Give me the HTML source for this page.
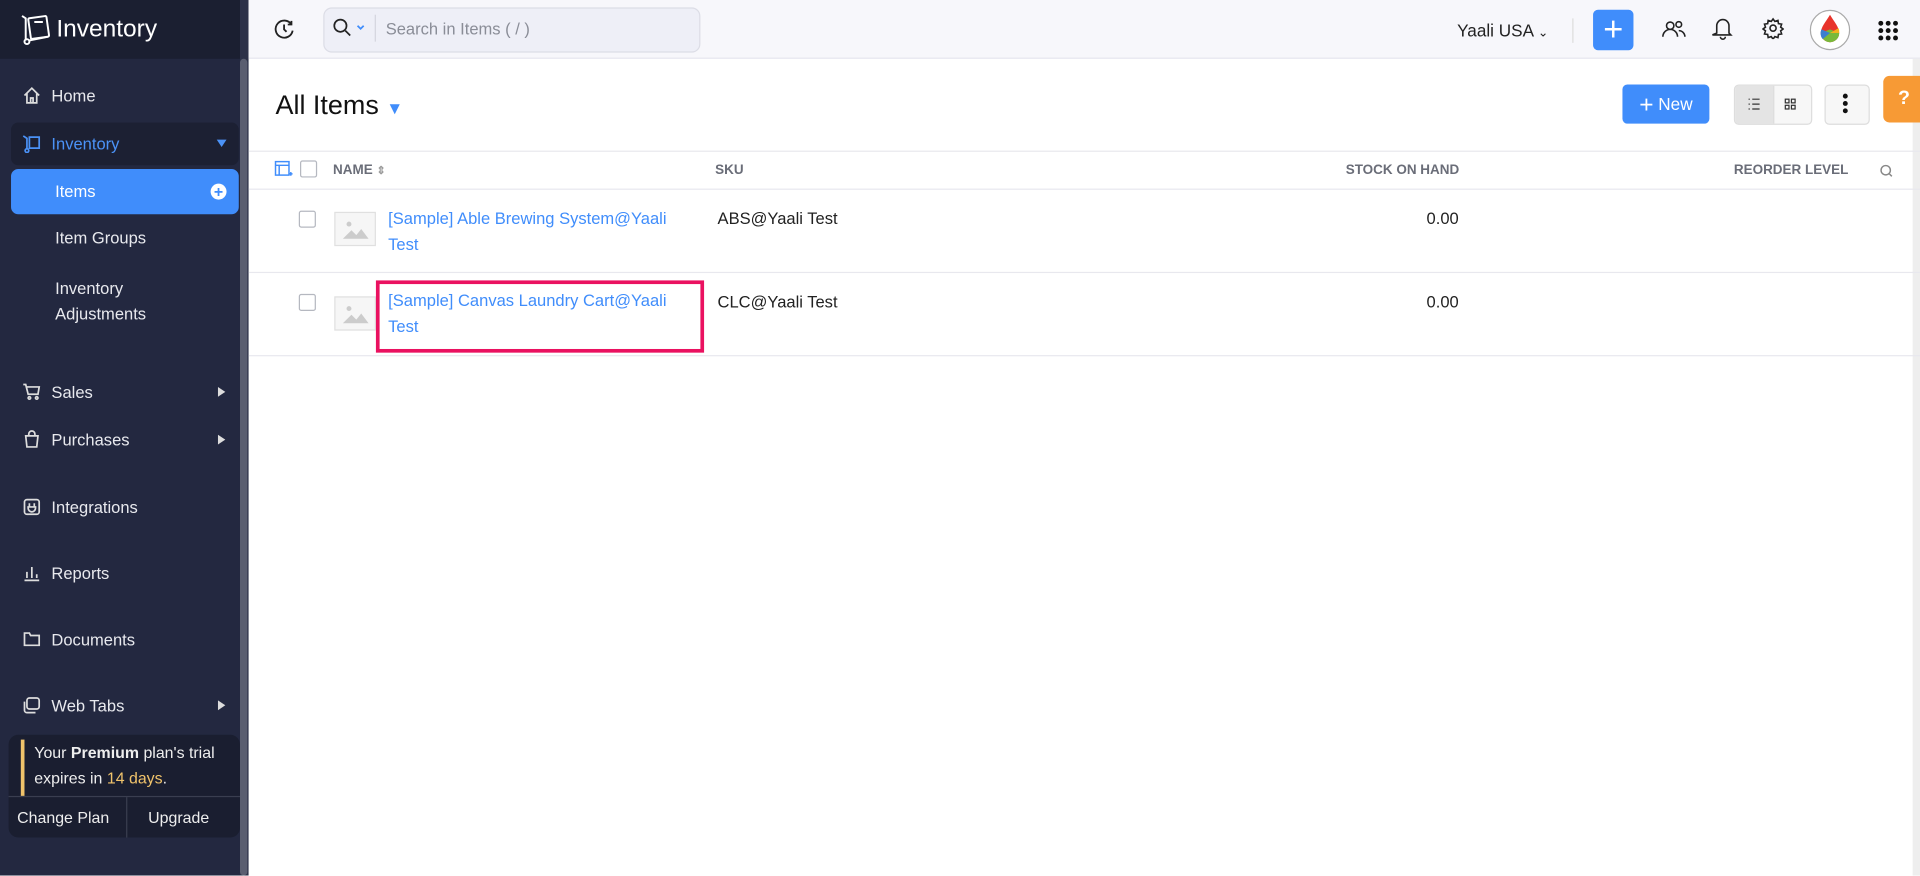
<!DOCTYPE html>
<html><head><meta charset="utf-8"><style>
html,body{margin:0;padding:0;width:1920px;height:876px;overflow:hidden;background:#fff}
#w{width:1568px;height:715px;transform:scale(1.22449);transform-origin:0 0;position:relative;font-family:"Liberation Sans",sans-serif;font-size:13.5px;color:#222}
.sb{position:absolute;left:0;top:0;width:196px;height:715px;background:#232840}
.sbs{position:absolute;left:196px;top:0;width:7px;height:715px;background:#2c3148}
.sbs i{position:absolute;left:0;top:48px;width:6px;height:667px;background:#5a5e70;border-radius:3px}
.logo{position:absolute;left:0;top:0;width:196px;height:48px;background:#1b1f31;color:#fff;font-size:20px}
.nav{position:absolute;left:18px;color:#e8e9ee;font-size:13.5px;display:flex;align-items:center}
.nav svg{margin-right:8px}
.arr{position:absolute;left:178px;width:0;height:0;border-top:4px solid transparent;border-bottom:4px solid transparent;border-left:6px solid #ddd}
.top{position:absolute;left:203px;top:0;right:0;height:47px;background:#f7f7fb;border-bottom:1px solid #e6e6ee}
.hd{font-size:11px;color:#6a6d78;font-weight:bold;position:absolute;top:133px}
.row{position:absolute;left:203px;right:0;border-bottom:1px solid #e8e8ee}
.cb{position:absolute;width:12px;height:12px;border:1px solid #b5b8c0;border-radius:2px;background:#fff}
.img{position:absolute;left:273px;width:32px;height:26px;border:1px solid #e0e0e0;background:#f6f6f6}
.lnk{position:absolute;left:317px;color:#408dfb;font-size:13.5px;line-height:21px}
</style></head><body><div id="w">
<div class="sb"></div><div class="sbs"><i></i></div>
<div class="logo">
<svg style="position:absolute;left:16px;top:11px" width="26" height="26" viewBox="0 0 26 26" fill="none" stroke="#fff" stroke-width="1.6"><path d="M2 2l3 2v18"/><rect x="8" y="3" width="15" height="17" rx="1" transform="rotate(-8 15 11)"/><circle cx="6" cy="23" r="2"/><path d="M8 22l15-3"/><path d="M12 7h7"/></svg>
<span style="position:absolute;left:46px;top:13px">Inventory</span></div>
<div class="nav" style="top:70px"><svg width="16" height="16" viewBox="0 0 16 16" fill="none" stroke="#ddd" stroke-width="1.4"><path d="M2 8l6-6 6 6M4 6v8h8V6M7 14v-4h2v4"/></svg>Home</div>
<div style="position:absolute;left:9px;top:100px;width:186px;height:35px;background:#1c2033;border-radius:6px"></div>
<div class="nav" style="top:109px;color:#4b92f7"><svg width="16" height="16" viewBox="0 0 16 16" fill="none" stroke="#4b92f7" stroke-width="1.4"><path d="M1 2l3 2v9M6 3h8v9H6z"/><circle cx="4" cy="14" r="1.5"/></svg>Inventory</div>
<div style="position:absolute;left:177px;top:114px;border-left:4px solid transparent;border-right:4px solid transparent;border-top:6px solid #4b92f7"></div>
<div style="position:absolute;left:9px;top:138px;width:186px;height:37px;background:#408dfb;border-radius:6px"></div>
<div class="nav" style="top:149px;left:45px;color:#fff">Items</div>
<div style="position:absolute;left:172px;top:150px;width:13px;height:13px;border-radius:50%;background:#fff;color:#408dfb;font-size:13px;line-height:13px;text-align:center;font-weight:bold">+</div>
<div class="nav" style="top:187px;left:45px">Item Groups</div>
<div class="nav" style="top:225px;left:45px;line-height:21px">Inventory<br>Adjustments</div>
<div class="nav" style="top:312px"><svg width="16" height="16" viewBox="0 0 16 16" fill="none" stroke="#ddd" stroke-width="1.4"><path d="M1 2h2l2 8h8l1-6H4"/><circle cx="6" cy="13" r="1"/><circle cx="12" cy="13" r="1"/></svg>Sales</div><div class="arr" style="top:316px"></div>
<div class="nav" style="top:351px"><svg width="16" height="16" viewBox="0 0 16 16" fill="none" stroke="#ddd" stroke-width="1.4"><path d="M3 5h10l-1 9H4zM5.5 5V3.5a2.5 2.5 0 015 0V5"/></svg>Purchases</div><div class="arr" style="top:355px"></div>
<div class="nav" style="top:406px"><svg width="16" height="16" viewBox="0 0 16 16" fill="none" stroke="#ddd" stroke-width="1.4"><rect x="2" y="2" width="12" height="12" rx="2"/><path d="M6 5v3M10 5v3M5 8h6v1a3 3 0 01-6 0z"/></svg>Integrations</div>
<div class="nav" style="top:460px"><svg width="16" height="16" viewBox="0 0 16 16" fill="none" stroke="#ddd" stroke-width="1.4"><path d="M2 14h12M4 12V7M8 12V3M12 12V9"/></svg>Reports</div>
<div class="nav" style="top:514px"><svg width="16" height="16" viewBox="0 0 16 16" fill="none" stroke="#ddd" stroke-width="1.4"><path d="M2 3h4l1 2h7v8H2z"/></svg>Documents</div>
<div class="nav" style="top:568px"><svg width="16" height="16" viewBox="0 0 16 16" fill="none" stroke="#ddd" stroke-width="1.4"><rect x="4" y="2" width="10" height="9" rx="2"/><path d="M2 5v7a2 2 0 002 2h7"/></svg>Web Tabs</div><div class="arr" style="top:572px"></div>
<div style="position:absolute;left:7px;top:600px;width:189px;height:84px;background:#1a1e30;border-radius:8px"></div>
<div style="position:absolute;left:17px;top:604px;width:3px;height:46px;background:#f0c36b"></div>
<div style="position:absolute;left:28px;top:604px;color:#eee;font-size:13px;line-height:21px">Your <b>Premium</b> plan's trial<br>expires in <span style="color:#f0c36b">14 days</span>.</div>
<div style="position:absolute;left:7px;top:650px;width:189px;border-top:1px solid #3a3e50"></div>
<div style="position:absolute;left:103px;top:651px;height:33px;border-left:1px solid #3a3e50"></div>
<div style="position:absolute;left:14px;top:660px;color:#eee;font-size:13px">Change Plan</div>
<div style="position:absolute;left:121px;top:660px;color:#eee;font-size:13px">Upgrade</div>

<div class="top"></div>
<svg style="position:absolute;left:223px;top:15px" width="18" height="18" viewBox="0 0 18 18" fill="none" stroke="#222" stroke-width="1.5"><path d="M15 5A7 7 0 1016 10"/><path d="M15 2v3h-3M9 5v4l2 2"/></svg>
<div style="position:absolute;left:264px;top:6px;width:306px;height:35px;background:#eeeff7;border:1px solid #dcdde6;border-radius:7px"></div>
<svg style="position:absolute;left:271px;top:14px" width="30" height="18" viewBox="0 0 30 18" fill="none" stroke="#222" stroke-width="1.4"><circle cx="7" cy="7" r="5"/><path d="M11 11l4 4"/><path d="M21 7l2.5 2.5L26 7" stroke="#408dfb"/></svg>
<div style="position:absolute;left:306px;top:12px;height:22px;border-left:1px solid #d4d5de"></div>
<div style="position:absolute;left:315px;top:16px;color:#8a8d97;font-size:13.5px">Search in Items ( / )</div>
<div style="position:absolute;left:1190px;top:17px;font-size:14px;color:#222">Yaali USA <span style="font-size:10px">&#8964;</span></div>
<div style="position:absolute;left:1284px;top:15px;height:20px;border-left:1px solid #ddd"></div>
<div style="position:absolute;left:1301px;top:8px;width:33px;height:33px;background:#408dfb;border-radius:4px;color:#fff;font-size:28px;line-height:31px;text-align:center;font-weight:200">+</div>
<svg style="position:absolute;left:1357px;top:15px" width="20" height="18" viewBox="0 0 20 18" fill="none" stroke="#222" stroke-width="1.3"><circle cx="7" cy="6" r="3"/><path d="M1 15a6 6 0 0112 0"/><circle cx="14" cy="5" r="2.3"/><path d="M14 10a5 5 0 015 5"/></svg>
<svg style="position:absolute;left:1398px;top:13px" width="18" height="20" viewBox="0 0 18 20" fill="none" stroke="#222" stroke-width="1.3"><path d="M4 14V8a5 5 0 0110 0v6l1.5 1.5h-15zM7 17a2 2 0 004 0"/></svg>
<svg style="position:absolute;left:1439px;top:14px" width="18" height="18" viewBox="0 0 18 18" fill="none" stroke="#222" stroke-width="1.3"><circle cx="9" cy="9" r="2.5"/><path d="M9 1.5l1.5 2 2.5-.8.4 2.6 2.6.4-.8 2.5 2 1.5-2 1.5.8 2.5-2.6.4-.4 2.6-2.5-.8-1.5 2-1.5-2-2.5.8-.4-2.6-2.6-.4.8-2.5-2-1.5 2-1.5-.8-2.5 2.6-.4.4-2.6 2.5.8z"/></svg>
<div style="position:absolute;left:1478px;top:8px;width:31px;height:31px;border-radius:50%;border:1px solid #aaa;background:#fff;overflow:hidden">
<svg width="31" height="31" viewBox="0 0 31 31"><path d="M15.5 3C12 9 8 13 8 18a7.5 7.5 0 0015 0c0-5-4-9-7.5-15z" fill="#e8342b"/><path d="M8 18a7.5 7.5 0 0015 0l-7.5-3z" fill="#79b93a"/><path d="M8.5 15l7 3-6 5a7.5 7.5 0 01-1-8z" fill="#3b7fd0"/><path d="M15.5 18l7-4a8 8 0 01.5 4z" fill="#f1b21c"/></svg></div>
<svg style="position:absolute;left:1533px;top:16px" width="18" height="18" viewBox="0 0 18 18" fill="#111"><circle cx="3" cy="3" r="2"/><circle cx="9" cy="3" r="2"/><circle cx="15" cy="3" r="2"/><circle cx="3" cy="9" r="2"/><circle cx="9" cy="9" r="2"/><circle cx="15" cy="9" r="2"/><circle cx="3" cy="15" r="2"/><circle cx="9" cy="15" r="2"/><circle cx="15" cy="15" r="2"/></svg>
<div style="position:absolute;left:1562px;top:48px;width:6px;height:667px;background:#eee"></div>

<div style="position:absolute;left:225px;top:73px;font-size:22px;color:#111">All Items <span style="color:#408dfb;font-size:14px">&#9660;</span></div>
<div style="position:absolute;left:1325px;top:69px;width:71px;height:32px;background:#408dfb;border-radius:4px;color:#fff;font-size:14px;line-height:32px;text-align:center"><span style="font-size:20px;vertical-align:-2px;font-weight:300">+</span> New</div>
<div style="position:absolute;left:1416px;top:69px;width:62px;height:31px;border:1px solid #ddd;border-radius:4px;background:#f7f7f7;overflow:hidden"><div style="width:31px;height:31px;background:#e4e4e4;border-right:1px solid #ddd"></div></div>
<svg style="position:absolute;left:1427px;top:80px" width="48" height="10" viewBox="0 0 48 10" fill="none" stroke="#333" stroke-width="1"><path d="M1 1h1M1 5h1M1 9h1M4 1h6M4 5h6M4 9h6"/><rect x="31" y="1" width="3" height="3"/><rect x="36" y="1" width="3" height="3"/><rect x="31" y="6" width="3" height="3"/><rect x="36" y="6" width="3" height="3"/></svg>
<div style="position:absolute;left:1490px;top:69px;width:35px;height:31px;border:1px solid #ddd;border-radius:4px;background:#f7f7f7"></div>
<svg style="position:absolute;left:1504px;top:76px" width="6" height="17" viewBox="0 0 6 17" fill="#111"><circle cx="3" cy="2.5" r="2"/><circle cx="3" cy="8.5" r="2"/><circle cx="3" cy="14.5" r="2"/></svg>
<div style="position:absolute;left:1538px;top:62px;width:32px;height:38px;background:#f79a35;border-radius:5px 0 0 5px;color:#fff;font-weight:bold;font-size:16px;line-height:38px;text-indent:12px">?</div>

<div class="row" style="top:123px;height:30px;border-top:1px solid #e8e8ee"></div>
<svg style="position:absolute;left:224px;top:131px" width="15" height="14" viewBox="0 0 15 14" fill="none" stroke="#408dfb" stroke-width="1.2"><rect x="1" y="1" width="11" height="11"/><path d="M1 4h11M4 4v8M12 11h3M13.5 9.5v3"/></svg>
<div class="cb" style="left:245px;top:131px"></div>
<div class="hd" style="left:272px">NAME <span style="color:#999;font-size:9px">&#8661;</span></div>
<div class="hd" style="left:584px">SKU</div>
<div class="hd" style="left:1099px">STOCK ON HAND</div>
<div class="hd" style="left:1416px">REORDER LEVEL</div>
<svg style="position:absolute;left:1535px;top:134px" width="11" height="11" viewBox="0 0 11 11" fill="none" stroke="#888" stroke-width="1.2"><circle cx="5" cy="5" r="3.8"/><path d="M8 8l2 2"/></svg>

<div class="row" style="top:154px;height:68px"></div>
<div class="cb" style="left:244px;top:172px"></div>
<div class="img" style="top:173px"><svg width="32" height="26" viewBox="0 0 32 26"><circle cx="11" cy="9" r="2" fill="#ccc"/><path d="M6 21l7-7 4 4 4-5 6 8z" fill="#ccc"/></svg></div>
<div class="lnk" style="top:168px">[Sample] Able Brewing System@Yaali<br>Test</div>
<div style="position:absolute;left:586px;top:171px">ABS@Yaali Test</div>
<div style="position:absolute;left:1165px;top:171px">0.00</div>

<div class="row" style="top:223px;height:67px"></div>
<div class="cb" style="left:244px;top:240px"></div>
<div class="img" style="top:242px"><svg width="32" height="26" viewBox="0 0 32 26"><circle cx="11" cy="9" r="2" fill="#ccc"/><path d="M6 21l7-7 4 4 4-5 6 8z" fill="#ccc"/></svg></div>
<div class="lnk" style="top:235px">[Sample] Canvas Laundry Cart@Yaali<br>Test</div>
<div style="position:absolute;left:307px;top:229px;width:262px;height:53px;border:3px solid #ea1160"></div>
<div style="position:absolute;left:586px;top:239px">CLC@Yaali Test</div>
<div style="position:absolute;left:1165px;top:239px">0.00</div>
</div></body></html>
